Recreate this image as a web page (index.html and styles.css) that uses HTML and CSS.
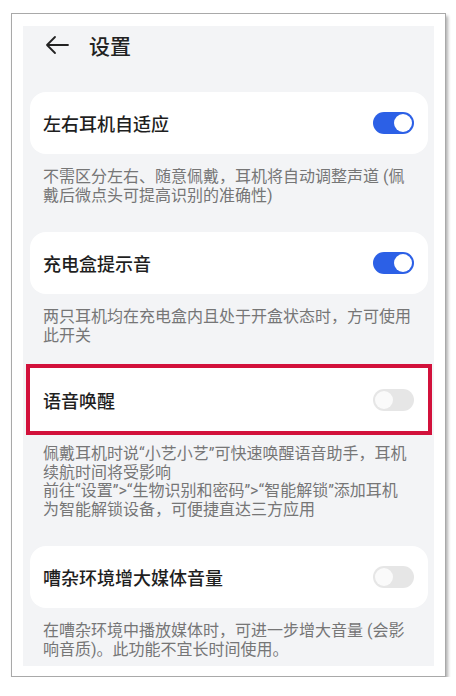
FILE: index.html
```html
<!DOCTYPE html>
<html lang="zh-CN">
<head>
    <meta charset="UTF-8">
    <title>设置</title>
    <link rel="stylesheet" href="styles.css">
</head>
<body>
    <div class="frame">
        <div class="screen">
            <!-- шапка -->
            <div class="topbar">
                <svg class="back" width="24" height="20" viewBox="0 0 24 20">
                    <path d="M10 2 L2 10 L10 18 M2 10 H23" fill="none" stroke="#222" stroke-width="1.8" stroke-linecap="round" stroke-linejoin="round"/>
                </svg>
                <span class="topbar-title">设置</span>
            </div>

            <section class="group">
                <div class="card">
                    <span class="card-title">左右耳机自适应</span>
                    <span class="switch on"></span>
                </div>
                <p class="note">不需区分左右、随意佩戴，耳机将自动调整声道 (佩<br>戴后微点头可提高识别的准确性)</p>
            </section>

            <section class="group">
                <div class="card">
                    <span class="card-title">充电盒提示音</span>
                    <span class="switch on"></span>
                </div>
                <p class="note">两只耳机均在充电盒内且处于开盒状态时，方可使用<br>此开关</p>
            </section>

            <section class="group group-marked">
                <div class="card marked">
                    <span class="card-title">语音唤醒</span>
                    <span class="switch"></span>
                </div>
                <p class="note">佩戴耳机时说“小艺小艺”可快速唤醒语音助手，耳机<br>续航时间将受影响<br>前往“设置”>“生物识别和密码”>“智能解锁”添加耳机<br>为智能解锁设备，可便捷直达三方应用</p>
            </section>

            <section class="group">
                <div class="card">
                    <span class="card-title">嘈杂环境增大媒体音量</span>
                    <span class="switch"></span>
                </div>
                <p class="note">在嘈杂环境中播放媒体时，可进一步增大音量 (会影<br>响音质)。此功能不宜长时间使用。</p>
            </section>
        </div>
    </div>
</body>
</html>
```

FILE: styles.css
```css
body {
    margin: 0;
    background: #fff;
    font-family: Roboto, "Noto Sans CJK SC", sans-serif;
    color: #1f1f1f;
}

.frame {
    width: 411px;
    margin: 13px 0 0 11px;
    padding: 12px 11px 10px 11px;
    border: 1px solid #a9a9a9;
    background: #fff;
    box-shadow: 2px 3px 3px rgba(0, 0, 0, 0.3);
}

.screen {
    background: #f3f4f6;
    padding: 0 6px 7px 7px;
}

.topbar {
    height: 38px;
    display: flex;
    align-items: center;
    padding-left: 15px;
    margin-bottom: 28px;
}

.back {
    margin-right: 20px;
}

.topbar-title {
    font-size: 21px;
    font-weight: 500;
    color: #222;
}

.group + .group {
    margin-top: 27px;
}

.group-marked {
    margin-top: 19px !important;
}

.card {
    height: 62px;
    background: #fff;
    border-radius: 16px;
    display: flex;
    align-items: center;
    justify-content: space-between;
    padding: 0 14px 0 13px;
}

.card.marked {
    height: 63px;
    border: 4px solid #d2113b;
    border-radius: 0;
    margin: 0 -4px;
    padding: 0 14px 0 13px;
}

.card-title {
    font-size: 18px;
    font-weight: 500;
    color: #1f1f1f;
}

.switch {
    width: 41px;
    height: 22px;
    border-radius: 11px;
    background: #e6e6e6;
    position: relative;
}

.switch::after {
    content: "";
    position: absolute;
    top: 2px;
    left: 2px;
    width: 18px;
    height: 18px;
    border-radius: 50%;
    background: #fafafa;
}

.switch.on {
    background: #2c60e6;
}

.switch.on::after {
    left: 21px;
    background: #fff;
}

.note {
    margin: 14px 0 0 0;
    padding: 0 4px 0 13px;
    font-size: 16px;
    line-height: 18.5px;
    color: #767676;
    white-space: nowrap;
}

.group-marked .note {
    margin-top: 10px;
}
```
